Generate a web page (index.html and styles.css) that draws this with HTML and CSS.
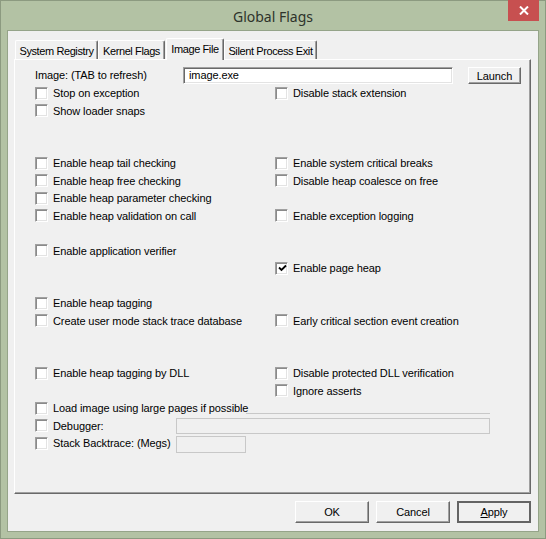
FILE: index.html
```html
<!DOCTYPE html>
<html lang="en">
<head>
    <meta charset="UTF-8">
    <title>Global Flags</title>
    <link rel="stylesheet" href="styles.css">
</head>
<body>
    <div class="window">
        <div class="titlebar">
            <span class="title">Global Flags</span>
            <div class="close-btn">
                <svg width="10" height="9" viewBox="0 0 10 9"><path d="M1 0.5 L9 8.5 M9 0.5 L1 8.5" stroke="#fff" stroke-width="2"/></svg>
            </div>
        </div>

        <div class="client">
            <div class="tabs">
                <div class="tab tab-sysreg">System Registry</div>
                <div class="tab tab-kernel">Kernel Flags</div>
                <div class="tab tab-image active">Image File</div>
                <div class="tab tab-silent">Silent Process Exit</div>
            </div>

            <div class="pane">
                <div class="flags">
                    <!-- image name -->
                    <div class="image-row">
                        <span class="image-label">Image: (TAB to refresh)</span>
                        <div class="edit">image.exe</div>
                        <div class="btn btn-launch">Launch</div>
                    </div>

                    <label class="check"><span class="box"></span>Stop on exception</label>
                    <label class="check"><span class="box"></span>Disable stack extension</label>
                    <label class="check"><span class="box"></span>Show loader snaps</label>
                    <div></div>
                    <div class="spacer"></div>
                    <div class="spacer"></div>

                    <label class="check"><span class="box"></span>Enable heap tail checking</label>
                    <label class="check"><span class="box"></span>Enable system critical breaks</label>
                    <label class="check"><span class="box"></span>Enable heap free checking</label>
                    <label class="check"><span class="box"></span>Disable heap coalesce on free</label>
                    <label class="check"><span class="box"></span>Enable heap parameter checking</label>
                    <div></div>
                    <label class="check"><span class="box"></span>Enable heap validation on call</label>
                    <label class="check"><span class="box"></span>Enable exception logging</label>
                    <div class="spacer"></div>

                    <label class="check"><span class="box"></span>Enable application verifier</label>
                    <div></div>
                    <div></div>
                    <label class="check"><span class="box checked"><svg width="9" height="9" viewBox="0 0 9 9"><path d="M1 3.5 L3.5 6 L8 1.5" fill="none" stroke="#000" stroke-width="1.8"/></svg></span>Enable page heap</label>
                    <div class="spacer"></div>

                    <label class="check"><span class="box"></span>Enable heap tagging</label>
                    <div></div>
                    <label class="check"><span class="box"></span>Create user mode stack trace database</label>
                    <label class="check"><span class="box"></span>Early critical section event creation</label>
                    <div class="spacer"></div>
                    <div class="spacer"></div>

                    <label class="check"><span class="box"></span>Enable heap tagging by DLL</label>
                    <label class="check"><span class="box"></span>Disable protected DLL verification</label>
                    <div></div>
                    <label class="check"><span class="box"></span>Ignore asserts</label>

                    <label class="check wide"><span class="box"></span>Load image using large pages if possible</label>

                    <div class="field-row">
                        <label class="check field-check"><span class="box"></span>Debugger:</label>
                        <div class="edit disabled edit-debugger"></div>
                    </div>
                    <div class="field-row">
                        <label class="check field-check"><span class="box"></span>Stack Backtrace: (Megs)</label>
                        <div class="edit disabled edit-megs"></div>
                    </div>
                </div>
            </div>

            <div class="buttons">
                <div class="btn btn-dlg">OK</div>
                <div class="btn btn-dlg">Cancel</div>
                <div class="btn btn-dlg default"><u>A</u>pply</div>
            </div>
        </div>
    </div>
</body>
</html>
```

FILE: styles.css
```css
body {
    margin: 0;
    font-family: "Liberation Sans", Arial, sans-serif;
    font-size: 11px;
    letter-spacing: -0.1px;
    color: #000;
    background: #b3c2a4;
}

.window {
    position: relative;
    width: 546px;
    height: 539px;
    box-sizing: border-box;
    border: 1px solid #8c9a80;
    background: #b3c2a4;
    padding: 0 6px 6px 6px;
    display: flex;
    flex-direction: column;
}

.titlebar {
    height: 29px;
    display: flex;
    align-items: center;
    justify-content: center;
}
.title {
    font-family: "Noto Sans", "Open Sans", sans-serif;
    font-size: 14px;
    letter-spacing: 0;
    color: #2e332b;
    margin-top: 2px;
}
.close-btn {
    position: absolute;
    top: -1px;
    right: 6px;
    width: 31px;
    height: 21px;
    background: #c75050;
    display: flex;
    align-items: center;
    justify-content: center;
}

.client {
    flex: 1;
    background: #f0f0f0;
    border: 1px solid #95a489;
    padding: 7px 7px 0 6px;
    display: flex;
    flex-direction: column;
}

/* tab strip */
.tabs {
    display: flex;
    align-items: flex-end;
    height: 21px;
    padding-left: 1px;
    position: relative;
    z-index: 1;
}
.tab {
    box-sizing: border-box;
    height: 19px;
    background: #f0f0f0;
    border-top: 1px solid #fff;
    border-left: 1px solid #fff;
    border-right: 1px solid #696969;
    box-shadow: inset -1px 0 #a0a0a0;
    border-radius: 2px 2px 0 0;
    display: flex;
    align-items: center;
    justify-content: center;
    padding-top: 1px;
    white-space: nowrap;
    letter-spacing: -0.4px;
}
.tab-sysreg { width: 83px; }
.tab-kernel { width: 67px; margin-right: 1px; }
.tab-image { width: 58px; }
.tab-silent { width: 93px; }
.tab.active {
    height: 22px;
    margin-bottom: -1px;
    padding-bottom: 3px;
}

/* page frame */
.pane {
    box-sizing: border-box;
    width: 517px;
    height: 435px;
    border-top: 1px solid #fff;
    border-left: 1px solid #fff;
    border-right: 1px solid #696969;
    border-bottom: 1px solid #696969;
    box-shadow: inset -1px -1px #a0a0a0;
    padding: 7px 0 0 20px;
}

.flags {
    display: grid;
    grid-template-columns: 240px 1fr;
    grid-auto-rows: 17.5px;
}
.spacer,
.image-row,
.wide,
.field-row {
    grid-column: 1 / 3;
}

.image-row {
    display: flex;
    align-items: flex-start;
}
.image-label {
    width: 148px;
    line-height: 17px;
}

.edit {
    box-sizing: border-box;
    height: 17px;
    background: #fff;
    border: 1px solid;
    border-color: #a0a0a0 #fff #fff #a0a0a0;
    box-shadow: inset 1px 1px #696969, inset -1px -1px #e3e3e3;
    padding: 0 5px;
    line-height: 15px;
}
.image-row .edit {
    width: 270px;
    margin-right: 15px;
}
.edit.disabled {
    background: #f0f0f0;
    border: 1px solid #c8c8c8;
    box-shadow: none;
}
.edit-debugger {
    position: relative;
    width: 314px;
    height: 16px;
    margin-top: 1px;
}
/* top edge of the debugger field showing past the checkbox above */
.edit-debugger::before {
    content: "";
    position: absolute;
    top: -6px;
    left: 69px;
    right: -1px;
    border-top: 1px solid #c8c8c8;
}
.edit-megs {
    width: 70px;
    margin-top: 1px;
}

.btn {
    box-sizing: border-box;
    background: #f0f0f0;
    border-top: 1px solid #fff;
    border-left: 1px solid #fff;
    border-right: 1px solid #696969;
    border-bottom: 1px solid #696969;
    box-shadow: inset -1px -1px #a0a0a0;
    display: flex;
    align-items: center;
    justify-content: center;
}
.btn-launch {
    width: 53px;
    height: 17px;
}

.check {
    display: flex;
    align-items: center;
    white-space: nowrap;
}
.box {
    box-sizing: border-box;
    width: 13px;
    height: 13px;
    margin-right: 5px;
    background: #fff;
    border: 1px solid;
    border-color: #a0a0a0 #fff #fff #a0a0a0;
    box-shadow: inset 1px 1px #8a8a8a, inset -1px -1px #e3e3e3;
    display: flex;
    align-items: center;
    justify-content: center;
    flex-shrink: 0;
}
.box svg {
    margin: 1px 0 0 1px;
}

.field-row {
    display: flex;
    align-items: flex-start;
}
.field-check {
    width: 141px;
    height: 17.5px;
}

/* dialog buttons */
.buttons {
    display: flex;
    justify-content: flex-end;
    gap: 7px;
    margin-top: 7px;
}
.btn-dlg {
    width: 74px;
    height: 22px;
    font-size: 11px;
}
.btn-dlg.default {
    outline: 1px solid #646464;
    outline-offset: -2px;
    border-color: #646464;
}
```
